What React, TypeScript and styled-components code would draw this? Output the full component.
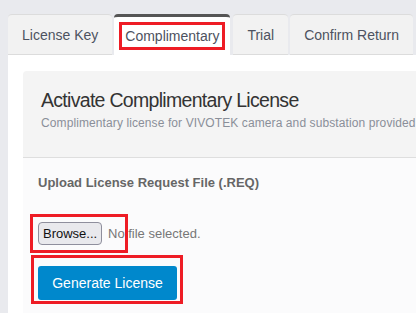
import React from 'react';
import styled, { createGlobalStyle } from 'styled-components';

const GlobalStyle = createGlobalStyle`
  html, body {
    margin: 0;
    padding: 0;
    background: #e9eaee;
    font-family: "Liberation Sans", Arial, sans-serif;
    overflow: hidden;
  }
`;

const tabs = ['License Key', 'Complimentary', 'Trial', 'Confirm Return'];
const activeTab = 1;

export default function App() {
  return (
    <>
      <GlobalStyle />
      <Page>
        <TabBar>
          {tabs.map((label, i) => (
            <Tab key={label} $active={i === activeTab}>
              {i === activeTab ? <Marked>{label}</Marked> : label}
            </Tab>
          ))}
        </TabBar>
        <Panel>
          <Card>
            <CardHeader>
              <Title>Activate Complimentary License</Title>
              <Subtitle>Complimentary license for VIVOTEK camera and substation provided</Subtitle>
            </CardHeader>
            <CardBody>
              <FieldLabel>Upload License Request File (.REQ)</FieldLabel>
              <FileRow>
                <Annotated>
                  <BrowseButton type="button">Browse...</BrowseButton>
                </Annotated>
                <FileName>No file selected.</FileName>
              </FileRow>
              <ActionRow>
                <Annotated $wide>
                  <PrimaryButton type="button">Generate License</PrimaryButton>
                </Annotated>
              </ActionRow>
            </CardBody>
          </Card>
        </Panel>
      </Page>
    </>
  );
}

const Page = styled.div`
  padding: 14px 0 0 8px;
  width: 600px;
`;

const TabBar = styled.div`
  display: flex;
  align-items: flex-end;
  gap: 2px;
`;

const Tab = styled.div<{ $active?: boolean }>`
  box-sizing: border-box;
  height: 41px;
  display: flex;
  align-items: center;
  justify-content: center;
  padding: ${(p) => (p.$active ? '0 5px 0 5px' : '0 14px')};
  font-size: 14px;
  color: #4d5260;
  background: ${(p) => (p.$active ? '#ffffff' : '#f2f2f2')};
  border-radius: 4px 4px 0 0;
  border-top: ${(p) => (p.$active ? '3px solid #555555' : '1px solid #dcdcdc')};
  border-bottom: ${(p) => (p.$active ? 'none' : '1px solid #dcdcdc')};
  margin-right: ${(p) => (p.$active ? '1px' : '0')};
`;

const Marked = styled.span`
  display: inline-block;
  border: 3px solid #ee1c25;
  padding: 3px 3px;
  line-height: 16px;
`;

const Panel = styled.div`
  background: #ffffff;
  padding: 16px 0 0 15px;
`;

const Card = styled.div`
  background: #fbfbfc;
  border-radius: 4px 0 0 0;
  padding-bottom: 17px;
`;

const CardHeader = styled.div`
  background: #f4f4f4;
  border-bottom: 1px solid #dedede;
  border-radius: 4px 0 0 0;
  padding: 16px 18px 26px 18px;
`;

const Title = styled.h2`
  margin: 0;
  font-size: 19.5px;
  font-weight: normal;
  letter-spacing: -0.7px;
  line-height: 26px;
  color: #333333;
`;

const Subtitle = styled.p`
  margin: 2px 0 0 0;
  font-size: 12px;
  line-height: 16px;
  letter-spacing: 0.1px;
  color: #8a8f99;
  white-space: nowrap;
`;

const CardBody = styled.div`
  padding: 17px 0 0 15px;
`;

const FieldLabel = styled.div`
  font-size: 13px;
  font-weight: bold;
  color: #666666;
  line-height: 16px;
`;

const FileRow = styled.div`
  display: flex;
  align-items: center;
  margin-top: 31px;
`;

const ActionRow = styled.div`
  display: flex;
  margin-top: 21px;
`;

const Annotated = styled.div<{ $wide?: boolean }>`
  position: relative;
  display: inline-flex;

  &::after {
    content: '';
    position: absolute;
    pointer-events: none;
    border: 3px solid #ee1c25;
    ${(p) =>
      p.$wide
        ? 'left: -7px; right: -6px; top: -11px; bottom: -4px;'
        : 'left: -8px; right: -26px; top: -8px; bottom: -8px;'}
  }
`;

const BrowseButton = styled.button`
  box-sizing: border-box;
  height: 23px;
  width: 64px;
  padding: 0 4px;
  font-family: "Liberation Sans", Arial, sans-serif;
  font-size: 13px;
  color: #111111;
  background: #e9e9ed;
  border: 1px solid #8f8f9d;
  border-radius: 4px;
`;

const FileName = styled.span`
  margin-left: 6px;
  font-size: 13px;
  color: #777777;
`;

const PrimaryButton = styled.button`
  box-sizing: border-box;
  height: 34px;
  width: 139px;
  font-family: "Liberation Sans", Arial, sans-serif;
  font-size: 14px;
  color: #ffffff;
  background: #0088cc;
  border: none;
  border-radius: 3px;
`;
